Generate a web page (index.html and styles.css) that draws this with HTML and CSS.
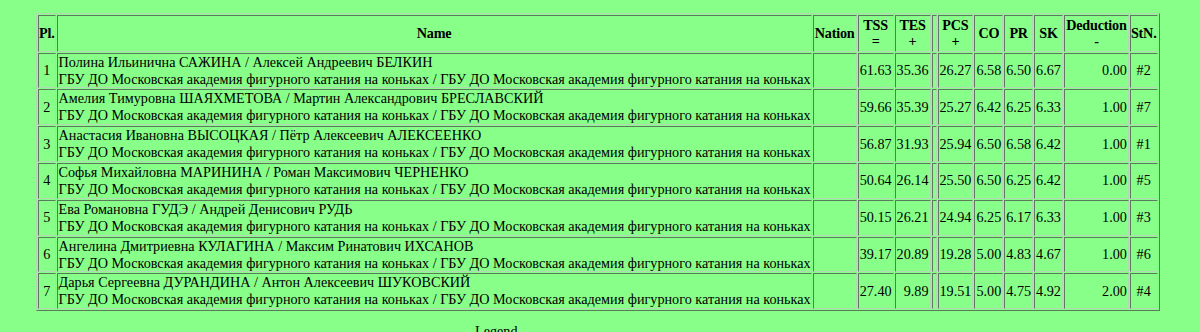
FILE: index.html
```html
<!DOCTYPE html>
<html>
<head>
<meta charset="utf-8">
<link rel="stylesheet" href="styles.css">
</head>
<body>
<div class="wrap">
<table class="results">
<thead>
<tr>
<th class="c-pl">Pl.</th>
<th class="c-name">Name</th>
<th class="c-nat">Nation</th>
<th class="c-num">TSS<br>=</th>
<th class="c-num">TES<br>+</th>
<th class="c-gap"></th>
<th class="c-num">PCS<br>+</th>
<th class="c-sm">CO</th>
<th class="c-sm">PR</th>
<th class="c-sm">SK</th>
<th class="c-ded">Deduction<br>-</th>
<th class="c-stn">StN.</th>
</tr>
</thead>
<tbody>
<tr><td class="pl">1</td><td class="name">Полина Ильинична САЖИНА / Алексей Андреевич БЕЛКИН<br>ГБУ ДО Московская академия фигурного катания на коньках / ГБУ ДО Московская академия фигурного катания на коньках</td><td></td><td class="num">61.63</td><td class="num">35.36</td><td class="gap"></td><td class="num">26.27</td><td class="num">6.58</td><td class="num">6.50</td><td class="num">6.67</td><td class="num">0.00</td><td class="stn">#2</td></tr>
<tr><td class="pl">2</td><td class="name">Амелия Тимуровна ШАЯХМЕТОВА / Мартин Александрович БРЕСЛАВСКИЙ<br>ГБУ ДО Московская академия фигурного катания на коньках / ГБУ ДО Московская академия фигурного катания на коньках</td><td></td><td class="num">59.66</td><td class="num">35.39</td><td class="gap"></td><td class="num">25.27</td><td class="num">6.42</td><td class="num">6.25</td><td class="num">6.33</td><td class="num">1.00</td><td class="stn">#7</td></tr>
<tr><td class="pl">3</td><td class="name">Анастасия Ивановна ВЫСОЦКАЯ / Пётр Алексеевич АЛЕКСЕЕНКО<br>ГБУ ДО Московская академия фигурного катания на коньках / ГБУ ДО Московская академия фигурного катания на коньках</td><td></td><td class="num">56.87</td><td class="num">31.93</td><td class="gap"></td><td class="num">25.94</td><td class="num">6.50</td><td class="num">6.58</td><td class="num">6.42</td><td class="num">1.00</td><td class="stn">#1</td></tr>
<tr><td class="pl">4</td><td class="name">Софья Михайловна МАРИНИНА / Роман Максимович ЧЕРНЕНКО<br>ГБУ ДО Московская академия фигурного катания на коньках / ГБУ ДО Московская академия фигурного катания на коньках</td><td></td><td class="num">50.64</td><td class="num">26.14</td><td class="gap"></td><td class="num">25.50</td><td class="num">6.50</td><td class="num">6.25</td><td class="num">6.42</td><td class="num">1.00</td><td class="stn">#5</td></tr>
<tr><td class="pl">5</td><td class="name">Ева Романовна ГУДЭ / Андрей Денисович РУДЬ<br>ГБУ ДО Московская академия фигурного катания на коньках / ГБУ ДО Московская академия фигурного катания на коньках</td><td></td><td class="num">50.15</td><td class="num">26.21</td><td class="gap"></td><td class="num">24.94</td><td class="num">6.25</td><td class="num">6.17</td><td class="num">6.33</td><td class="num">1.00</td><td class="stn">#3</td></tr>
<tr><td class="pl">6</td><td class="name">Ангелина Дмитриевна КУЛАГИНА / Максим Ринатович ИХСАНОВ<br>ГБУ ДО Московская академия фигурного катания на коньках / ГБУ ДО Московская академия фигурного катания на коньках</td><td></td><td class="num">39.17</td><td class="num">20.89</td><td class="gap"></td><td class="num">19.28</td><td class="num">5.00</td><td class="num">4.83</td><td class="num">4.67</td><td class="num">1.00</td><td class="stn">#6</td></tr>
<tr><td class="pl">7</td><td class="name">Дарья Сергеевна ДУРАНДИНА / Антон Алексеевич ШУКОВСКИЙ<br>ГБУ ДО Московская академия фигурного катания на коньках / ГБУ ДО Московская академия фигурного катания на коньках</td><td></td><td class="num">27.40</td><td class="num">9.89</td><td class="gap"></td><td class="num">19.51</td><td class="num">5.00</td><td class="num">4.75</td><td class="num">4.92</td><td class="num">2.00</td><td class="stn">#4</td></tr>
</tbody>
</table>
<div class="legend">Legend</div>
</div>
</body>
</html>
```
FILE: styles.css
```css
html, body {
  margin: 0;
  padding: 0;
  background: #88ff88;
}
body {
  font-family: "Liberation Serif", "Times New Roman", serif;
  font-size: 14.2px;
  color: #000;
}
.wrap {
  padding: 13px 0 0 36px;
}
.results {
  border-collapse: separate;
  border-spacing: 1px;
  border: 1px solid;
  border-color: #b4d8b4 #5c7a5c #5c7a5c #b4d8b4;
  background: #88ff88;
}
.results th, .results td {
  border: 1px solid;
  border-color: #5c7a5c #b4d8b4 #b4d8b4 #5c7a5c;
  padding: 0 1px;
  line-height: 16.9px;
}
.results th {
  font-weight: bold;
  text-align: center;
  vertical-align: middle;
  padding: 1px 0;
  letter-spacing: -0.2px;
  line-height: 16.3px;
}
.results th.c-nat { width: 42px; }
.results th.c-ded { width: 63px; }
.results th.c-gap { width: 1px; padding: 1px; }
.results td { vertical-align: middle; }
.results td.gap { width: 1px; padding: 0 1px; }
.results td.pl { text-align: center; }
.results td.name { text-align: left; white-space: nowrap; padding-right: 0; }
.results td.num { text-align: right; padding: 0 1px; }
.results td.stn { text-align: center; padding: 0 1px; }
.legend {
  padding: 12px 0 0 439px;
  line-height: 17px;
}
```
